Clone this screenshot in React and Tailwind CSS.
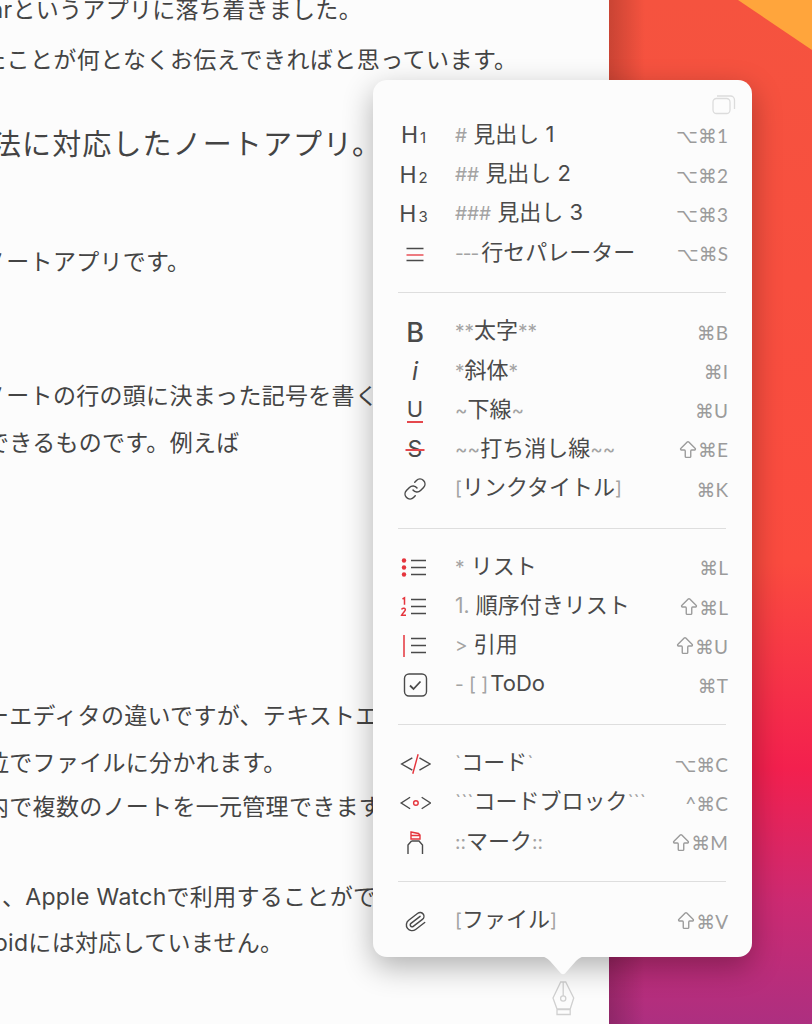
import React from "react";
import { ArrowBigUp, Link, Paperclip } from "lucide-react";

const jp = "font-['Inter','Noto_Sans_CJK_JP',sans-serif]";

function Mark({ children }) {
  return <span className="text-[19px] text-[#a3a3a3]">{children}</span>;
}

function Heading({ n }) {
  return (
    <span className="flex items-baseline -ml-[3px] text-[#4a4a4a] font-['Inter',sans-serif]">
      <span className="text-[23px] leading-none">H</span>
      <span className="text-[15px] leading-none ml-[2px]">{n}</span>
    </span>
  );
}

const icons = {
  sep: (
    <svg width="32" height="24" viewBox="0 0 32 24" fill="none" strokeWidth="1.300">
      <path d="M7.500 6.500h17M7.500 18.500h17" stroke="#4a4a4a" />
      <path d="M7.500 13h17" stroke="#e5353d" />
    </svg>
  ),
  bold: <span className="text-[27px] leading-none font-medium text-[#4a4a4a] font-['Inter',sans-serif]">B</span>,
  italic: <span className="text-[25px] leading-none italic text-[#4a4a4a] font-['Inter',sans-serif]">i</span>,
  underline: (
    <span className="flex flex-col items-center text-[22px] leading-none text-[#4a4a4a] font-['Inter',sans-serif]">
      U
      <span className="w-[16px] h-[1.5px] mt-[1px] bg-[#e5484d]" />
    </span>
  ),
  strike: (
    <span className="relative flex items-center justify-center text-[23px] leading-none text-[#4a4a4a] font-['Inter',sans-serif]">
      S
      <span className="absolute left-1/2 -translate-x-1/2 w-[19px] h-[1.5px] bg-[#e5484d]" />
    </span>
  ),
  link: <Link size={24} strokeWidth={1.500} color="#4a4a4a" />,
  bullets: (
    <svg width="32" height="24" viewBox="0 0 32 24" fill="none">
      <circle cx="5" cy="4.500" r="2.200" fill="#e5353d" />
      <circle cx="5" cy="11.500" r="2.200" fill="#e5353d" />
      <circle cx="5" cy="18.500" r="2.200" fill="#e5353d" />
      <path d="M12 4.500h15M12 11.500h15M12 18.500h15" stroke="#4a4a4a" strokeWidth="1.400" />
    </svg>
  ),
  numbers: (
    <svg width="32" height="24" viewBox="0 0 32 24" fill="none">
      <path d="M3.500 4l2-1.200v7" stroke="#e5353d" strokeWidth="1.500" />
      <path d="M2.600 14.500c.6-2 4.600-1.600 3.600.8-.4 1-2.600 2.800-3.600 5h4.400" stroke="#e5353d" strokeWidth="1.500" />
      <path d="M12 4.500h15M12 11.500h15M12 18.500h15" stroke="#4a4a4a" strokeWidth="1.400" />
    </svg>
  ),
  quote: (
    <svg width="32" height="24" viewBox="0 0 32 24" fill="none">
      <path d="M5 1v22" stroke="#e5353d" strokeWidth="1.500" />
      <path d="M12 4.500h15M12 11.500h15M12 18.500h15" stroke="#4a4a4a" strokeWidth="1.400" />
    </svg>
  ),
  todo: (
    <svg width="32" height="24" viewBox="0 0 32 24" fill="none" stroke="#4a4a4a">
      <rect x="5.500" y="1" width="22" height="22" rx="4.500" strokeWidth="1.400" />
      <path d="M11 12.500l3.500 3.500 7-7.500" strokeWidth="1.800" />
    </svg>
  ),
  code: (
    <svg width="36" height="26" viewBox="0 0 36 26" fill="none" strokeWidth="1.600">
      <path d="M15 6l-12 7 12 7M23 6l12 7-12 7" stroke="#4a4a4a" />
      <path d="M21.500 2l-6 22" stroke="#e5353d" />
    </svg>
  ),
  codeblock: (
    <svg width="36" height="24" viewBox="0 0 36 24" fill="none" strokeWidth="1.600">
      <path d="M12.500 5.500l-10 6.500 10 6.500M25.500 5.500l10 6.500-10 6.500" stroke="#4a4a4a" />
      <circle cx="19" cy="12" r="2.600" stroke="#e5353d" />
    </svg>
  ),
  mark: (
    <svg width="32" height="26" viewBox="0 0 32 26" fill="none" strokeWidth="1.400">
      <path d="M12 2l7.500 1.500 1.500 1.500v4h-9zM12 5.500h9" stroke="#e5353d" />
      <path d="M12.500 11h7.500l3.500 4v9M12.500 11l-3.500 4v9" stroke="#4a4a4a" />
    </svg>
  ),
  clip: <Paperclip size={23} strokeWidth={1.500} color="#4a4a4a" className="rotate-[8deg]" />,
};

const sections = [
  [
    { icon: <Heading n="1" />, label: <><Mark>#</Mark> 見出し 1</>, keys: "⌥⌘1" },
    { icon: <Heading n="2" />, label: <><Mark>##</Mark> 見出し 2</>, keys: "⌥⌘2" },
    { icon: <Heading n="3" />, label: <><Mark>###</Mark> 見出し 3</>, keys: "⌥⌘3" },
    { icon: icons.sep, label: <><span className="text-[19px] text-[#a3a3a3] tracking-[-1px]">---</span><span className="ml-[3px]">行セパレーター</span></>, keys: "⌥⌘S" },
  ],
  [
    { icon: icons.bold, label: <><Mark>**</Mark>太字<Mark>**</Mark></>, keys: "⌘B" },
    { icon: icons.italic, label: <><Mark>*</Mark>斜体<Mark>*</Mark></>, keys: "⌘I" },
    { icon: icons.underline, label: <><Mark>~</Mark>下線<Mark>~</Mark></>, keys: "⌘U" },
    { icon: icons.strike, label: <><Mark>~~</Mark>打ち消し線<Mark>~~</Mark></>, keys: "⌘E", shift: true },
    { icon: icons.link, label: <><Mark>[</Mark>リンクタイトル<Mark>]</Mark></>, keys: "⌘K" },
  ],
  [
    { icon: icons.bullets, label: <><Mark>*</Mark> リスト</>, keys: "⌘L" },
    { icon: icons.numbers, label: <><span className="text-[21px] text-[#a3a3a3]">1.</span> 順序付きリスト</>, keys: "⌘L", shift: true },
    { icon: icons.quote, label: <><Mark>&gt;</Mark> 引用</>, keys: "⌘U", shift: true },
    { icon: icons.todo, label: <><Mark>- [ ]</Mark><span className="ml-[2px]">ToDo</span></>, keys: "⌘T" },
  ],
  [
    { icon: icons.code, label: <><Mark>`</Mark>コード<Mark>`</Mark></>, keys: "⌥⌘C" },
    { icon: icons.codeblock, label: <><Mark>```</Mark>コードブロック<Mark>```</Mark></>, keys: "^⌘C" },
    { icon: icons.mark, label: <><Mark>::</Mark>マーク<Mark>::</Mark></>, keys: "⌘M", shift: true },
  ],
  [{ icon: icons.clip, label: <><Mark>[</Mark>ファイル<Mark>]</Mark></>, keys: "⌘V", shift: true }],
];

function Row({ icon, label, keys, shift }) {
  return (
    <div className="flex items-center h-[39.2px]">
      <div className="w-[32px] ml-[1px] flex justify-center items-center">{icon}</div>
      <div className={`ml-[24px] flex-1 whitespace-nowrap text-[22px] leading-none -mt-[4px] text-[#4a4a4a] ${jp}`}>{label}</div>
      <div className="flex items-center text-[19px] leading-none text-[#9b9b9b] font-['Lato','DejaVu_Sans',sans-serif]">
        {shift && <ArrowBigUp size={22} strokeWidth={1.500} className="-mr-[1px]" />}
        {keys}
      </div>
    </div>
  );
}

function Popup() {
  return (
    <div className="absolute left-[373px] top-[80px] w-[379px] h-[877px] rounded-[14px] bg-[#fcfcfc] shadow-[0_10px_30px_rgba(0,0,0,0.3)] pt-[36.4px] pl-[25px] pr-[24px]">
      <svg className="absolute right-[16px] top-[14px]" width="24" height="21" viewBox="0 0 24 21" fill="none" stroke="#dcdcdc" strokeWidth="1.300">
        <rect x="1" y="4.500" width="17" height="15" rx="3.500" />
        <path d="M5 2h13.500a4 4 0 0 1 4 4v9" />
      </svg>
      {sections.map((rows, i) => (
        <div key={i}>
          {i > 0 && <div className="my-[19.3px] mr-[2px] h-px bg-[#dedede]" />}
          {rows.map((row, j) => (
            <Row key={j} {...row} />
          ))}
        </div>
      ))}
      <svg className="absolute left-[166px] top-[876px]" width="48" height="20" viewBox="0 0 48 20" fill="#fcfcfc">
        <path d="M0 0h48c-5 0-8 2-11 5L26 17.500c-1 1-3 1-4 0L11 5C8 2 5 0 0 0z" />
      </svg>
    </div>
  );
}

export default function App() {
  return (
    <div className={`relative w-[812px] h-[1024px] overflow-hidden flex ${jp}`}>
      <div className="w-[609px] h-full bg-[#fcfcfc] overflow-hidden whitespace-nowrap text-[23px] tracking-[0.3px] leading-[30px] text-[#444444] relative">
        <p className="-mt-[5px] -ml-[39px]">Bearというアプリに落ち着きました。</p>
        <p className="mt-[20px] -ml-[17px] tracking-[0.45px]">たことが何となくお伝えできればと思っています。</p>
        <p className="mt-[50px] -ml-[8px] text-[29px] tracking-[1.1px] leading-[40px]">法に対応したノートアプリ。</p>
        <p className="mt-[82px] -ml-[17px]">ノートアプリです。</p>
        <p className="mt-[104px] -ml-[17px]">ノートの行の頭に決まった記号を書く</p>
        <p className="mt-[17px] -ml-[14px]">できるものです。例えば</p>
        <p className="mt-[243px] -ml-[14px]">ーエディタの違いですが、テキストエディタ</p>
        <p className="mt-[17px] -ml-[14px]">位でファイルに分かれます。</p>
        <p className="mt-[14px] -ml-[14px]">内で複数のノートを一元管理できます</p>
        <p className="mt-[60px] ml-[2px]">、Apple Watchで利用することができ</p>
        <p className="mt-[16px] -ml-[59px]">Androidには対応していません。</p>
        <svg className="absolute left-[551px] top-[980px]" width="25" height="36" viewBox="0 0 25 36" fill="none" stroke="#d0d0d0" strokeWidth="1.300">
          <path d="M9.700 2h5l8 16-3.500 11H6L2 18zM12.200 2v14M6 29.500h13.200v5H6z" />
          <circle cx="12.200" cy="18.500" r="2.600" />
        </svg>
      </div>
      <div className="relative flex-1 h-full bg-[linear-gradient(to_right,rgba(0,0,0,0.18),rgba(0,0,0,0)_36px),linear-gradient(to_bottom,#f5533f_0%,#fb4b3f_55%,#f3204e_75%,#cd2a72_88%,#ad2f80_100%)]">
        <svg className="absolute right-0 top-0" width="74" height="50" viewBox="0 0 74 50">
          <path d="M0 0h74v50z" fill="#ffa53c" />
        </svg>
      </div>
      <Popup />
    </div>
  );
}
